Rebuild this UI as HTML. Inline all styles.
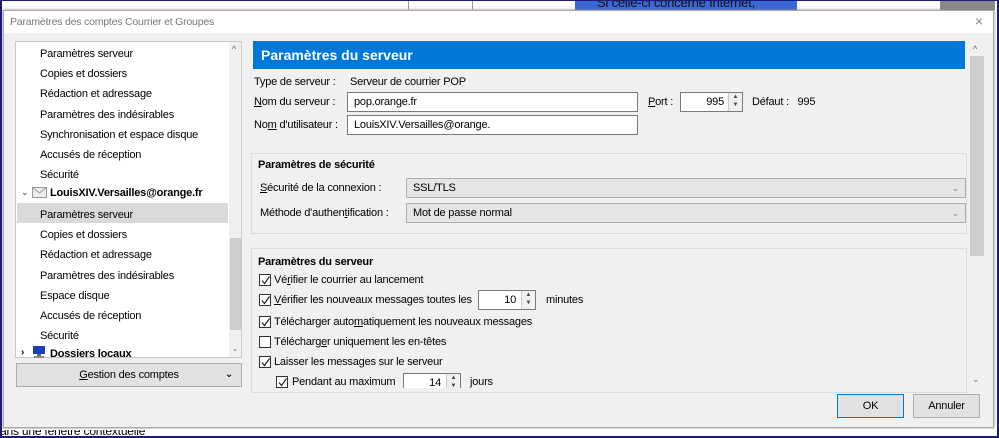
<!DOCTYPE html>
<html><head><meta charset="utf-8"><style>
*{box-sizing:border-box;margin:0;padding:0}
body{width:999px;height:438px;position:relative;overflow:hidden;background:#fff;font-family:"Liberation Sans","DejaVu Sans",sans-serif;font-size:11px;letter-spacing:-0.2px;color:#000}
.a{position:absolute;white-space:nowrap}
.inp{position:absolute;background:#fff;border:1px solid #7a7a7a}
.sel{position:absolute;background:#e5e5e5;border:1px solid #adadad;padding-left:6px;line-height:18px}
.cb{position:absolute;width:12px;height:12px;border:1px solid #333;background:#fff}
.cb svg{position:absolute;left:0;top:0}
.grp{position:absolute;border:1px solid #dcdcdc;background:#f0f0f0}
.btn{position:absolute;background:#e1e1e1;border:1px solid #adadad;text-align:center}
u{text-decoration:underline}
.spin{position:absolute;width:14px;background:#f0f0f0;border-left:1px solid #ccc;font-size:6px;line-height:8px;text-align:center;color:#444;letter-spacing:0}
</style></head><body>
<div class="a" style="left:0;top:0;width:999px;height:10px;background:#fff"></div>
<div class="a" style="left:575px;top:0;width:222px;height:10px;background:#3c67d6;color:#111;font-size:13px;line-height:6px;padding-left:22px;overflow:hidden">Si celle-ci concerne Internet,</div>
<div class="a" style="left:408px;top:0;width:1px;height:10px;background:#999"></div>
<div class="a" style="left:472px;top:0;width:1px;height:10px;background:#999"></div>
<div class="a" style="left:940px;top:0;width:55px;height:10px;background:#888"></div>
<div class="a" style="left:3px;top:10px;width:991px;height:418px;background:#f0f0f0;border:1px solid #aaa;box-shadow:0 0 3px #888"></div>
<div class="a" style="left:4px;top:11px;width:989px;height:22px;background:#fff;color:#777;font-size:10.5px;line-height:22px;padding-left:6px">Paramètres des comptes Courrier et Groupes</div>
<div class="a" style="left:975px;top:13px;color:#888;font-size:14px">×</div>
<div class="a" style="left:15px;top:41px;width:227px;height:317px;background:#fff;border:1px solid #c8c8c8"></div>
<div class="a" style="left:229px;top:42px;width:12px;height:315px;background:#f0f0f0"></div>
<div class="a" style="left:230px;top:238px;width:11px;height:92px;background:#cdcdcd"></div>
<div class="a" style="left:232px;top:44px;color:#666;font-size:9px">^</div>
<div class="a" style="left:231px;top:343px;color:#888;font-size:9px">⌄</div>
<div class="a" style="left:17px;top:203px;width:211px;height:20px;background:#d9d9d9"></div>
<div class="a" style="left:40px;top:44px;line-height:20.2px">Paramètres serveur<br>Copies et dossiers<br>Rédaction et adressage<br>Paramètres des indésirables<br>Synchronisation et espace disque<br>Accusés de réception<br>Sécurité</div>
<div class="a" style="left:21px;top:187px;font-size:9px;color:#333">⌄</div>
<svg class="a" style="left:32px;top:187px" width="15" height="11"><rect x=".5" y=".5" width="14" height="10" fill="#eee" stroke="#999"/><path d="M1 1l6.5 5L14 1" fill="none" stroke="#999"/></svg>
<div class="a" style="left:50px;top:187px;font-weight:bold">LouisXIV.Versailles@orange.fr</div>
<div class="a" style="left:40px;top:205px;line-height:20.2px">Paramètres serveur<br>Copies et dossiers<br>Rédaction et adressage<br>Paramètres des indésirables<br>Espace disque<br>Accusés de réception<br>Sécurité</div>
<div class="a" style="left:21px;top:347px;font-size:10px;font-weight:bold">›</div>
<svg class="a" style="left:32px;top:346px" width="14" height="12"><rect x="1" y="0" width="12" height="8" fill="#1a3fb5"/><rect x="5" y="8" width="4" height="2" fill="#666"/><rect x="2" y="10" width="10" height="2" fill="#888"/></svg>
<div class="a" style="left:50px;top:348px;font-weight:bold">Dossiers locaux</div>
<div class="btn" style="left:16px;top:363px;width:226px;height:24px;line-height:22px"><u>G</u>estion des comptes<span style="position:absolute;right:8px;font-size:10px;font-weight:bold">⌄</span></div>
<div class="a" style="left:253px;top:41px;width:712px;height:28px;background:#0078d7;color:#fff;font-weight:bold;font-size:14px;letter-spacing:0;line-height:28px;padding-left:8px">Paramètres du serveur</div>
<div class="a" style="left:969px;top:42px;width:16px;height:342px;background:#f0f0f0"></div>
<div class="a" style="left:970px;top:56px;width:14px;height:200px;background:#cdcdcd"></div>
<div class="a" style="left:973px;top:44px;font-size:9px;color:#555">^</div>
<div class="a" style="left:972px;top:374px;font-size:9px;color:#777">⌄</div>
<div class="a" style="left:254px;top:76px">Type de serveur :</div>
<div class="a" style="left:350px;top:76px">Serveur de courrier POP</div>
<div class="a" style="left:254px;top:96px"><u>N</u>om du serveur :</div>
<div class="inp" style="left:347px;top:92px;width:291px;height:20px;padding:3px 6px">pop.orange.fr</div>
<div class="a" style="left:648px;top:96px"><u>P</u>ort :</div>
<div class="inp" style="left:680px;top:92px;width:63px;height:20px;text-align:right;padding:3px 18px 0 0">995<div class="spin" style="right:0;top:0;height:18px">▲<br>▼</div></div>
<div class="a" style="left:752px;top:96px">Défaut :&nbsp;&nbsp;&nbsp;995</div>
<div class="a" style="left:254px;top:119px">No<u>m</u> d'utilisateur :</div>
<div class="inp" style="left:347px;top:115px;width:291px;height:20px;padding:3px 6px">LouisXIV.Versailles@orange.</div>
<div class="grp" style="left:251px;top:153px;width:716px;height:81px"></div>
<div class="a" style="left:258px;top:159px;font-weight:bold;font-size:11px">Paramètres de sécurité</div>
<div class="a" style="left:260px;top:182px"><u>S</u>écurité de la connexion :</div>
<div class="sel" style="left:406px;top:178px;width:560px;height:20px">SSL/TLS<span style="position:absolute;right:6px;color:#888;font-size:9px">⌄</span></div>
<div class="a" style="left:260px;top:207px">Méthode d'authen<u>t</u>ification :</div>
<div class="sel" style="left:406px;top:203px;width:560px;height:20px">Mot de passe normal<span style="position:absolute;right:6px;color:#888;font-size:9px">⌄</span></div>
<div class="grp" style="left:251px;top:248px;width:716px;height:145px"></div>
<div class="a" style="left:258px;top:256px;font-weight:bold;font-size:11px">Paramètres du serveur</div>
<div class="cb" style="left:259px;top:274px"><svg width="11" height="11"><path d="M2 5.5l2.5 3L9.5 1.5" fill="none" stroke="#222" stroke-width="1.2"/></svg></div>
<div class="a" style="left:274px;top:274px">Vé<u>r</u>ifier le courrier au lancement</div>
<div class="cb" style="left:259px;top:294px"><svg width="11" height="11"><path d="M2 5.5l2.5 3L9.5 1.5" fill="none" stroke="#222" stroke-width="1.2"/></svg></div>
<div class="a" style="left:274px;top:294px"><u>V</u>érifier les nouveaux messages toutes les</div>
<div class="inp" style="left:478px;top:290px;width:58px;height:20px;text-align:right;padding:3px 19px 0 0">10<div class="spin" style="right:0;top:0;height:18px">▲<br>▼</div></div>
<div class="a" style="left:546px;top:294px">minutes</div>
<div class="cb" style="left:259px;top:316px"><svg width="11" height="11"><path d="M2 5.5l2.5 3L9.5 1.5" fill="none" stroke="#222" stroke-width="1.2"/></svg></div>
<div class="a" style="left:274px;top:316px">Télécharger auto<u>m</u>atiquement les nouveaux messages</div>
<div class="cb" style="left:259px;top:336px"></div>
<div class="a" style="left:274px;top:336px">Télécharg<u>e</u>r uniquement les en-têtes</div>
<div class="cb" style="left:259px;top:356px"><svg width="11" height="11"><path d="M2 5.5l2.5 3L9.5 1.5" fill="none" stroke="#222" stroke-width="1.2"/></svg></div>
<div class="a" style="left:274px;top:356px">Laisser les messa<u>g</u>es sur le serveur</div>
<div class="a" style="left:252px;top:372px;width:714px;height:16px;overflow:hidden">
 <div class="cb" style="left:24px;top:4px"><svg width="11" height="11"><path d="M2 5.5l2.5 3L9.5 1.5" fill="none" stroke="#222" stroke-width="1.2"/></svg></div>
 <div class="a" style="left:40px;top:4px">Pendant au maximum</div>
 <div class="inp" style="left:151px;top:1px;width:58px;height:20px;text-align:right;padding:3px 19px 0 0">14<div class="spin" style="right:0;top:0;height:18px">▲<br>▼</div></div>
 <div class="a" style="left:218px;top:4px">jours</div>
</div>
<div class="btn" style="left:837px;top:394px;width:67px;height:24px;line-height:22px;border:1px solid #0078d7">OK</div>
<div class="btn" style="left:913px;top:394px;width:67px;height:24px;line-height:22px">Annuler</div>
<div class="a" style="left:0;top:429px;width:999px;height:9px;background:#fff;overflow:hidden"></div>
<div class="a" style="left:0;top:424px;font-size:12px;text-decoration:underline;height:14px;overflow:hidden;clip-path:inset(6px 0 0 0)">ans une fenêtre contextuelle</div>
<div class="a" style="left:0;top:0;width:999px;height:438px;border:2px solid #1c1c78;border-top-width:1px"></div>
</body></html>
